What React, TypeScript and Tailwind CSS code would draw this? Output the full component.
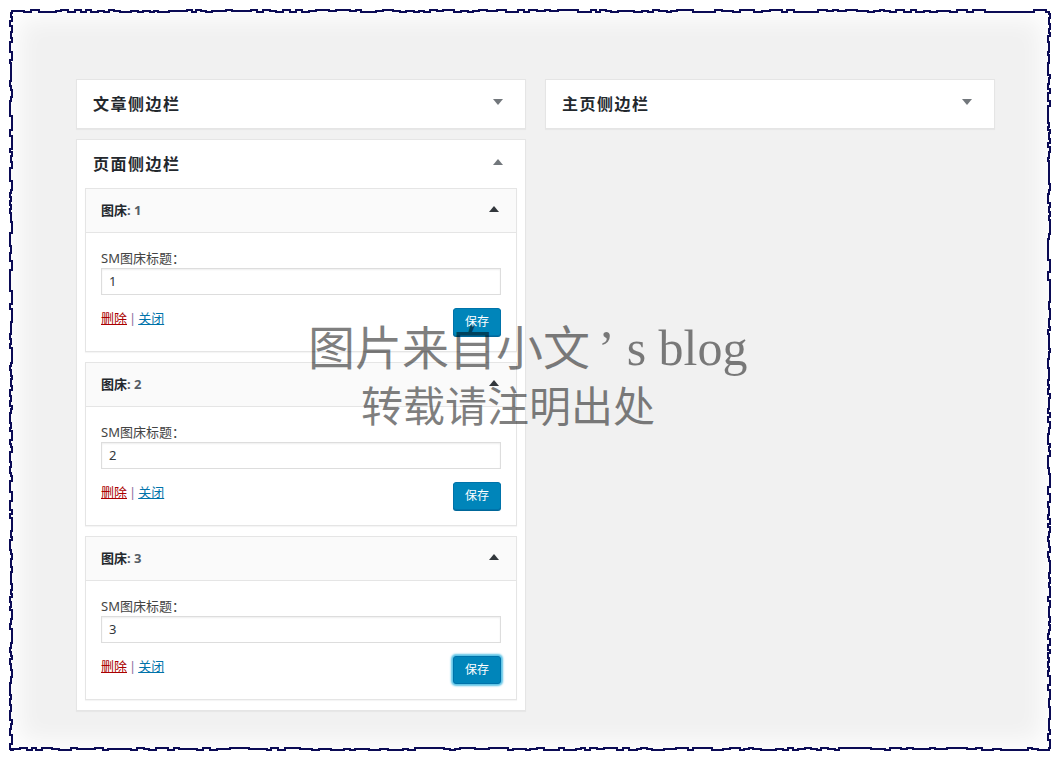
import React from "react";

const FONT = { fontFamily: '"Noto Sans", "Noto Sans CJK SC", sans-serif' };

function jaggedPath(w: number, h: number): string {
  let s = 12345;
  const r = () => {
    s = (s * 1103515245 + 12345) & 0x7fffffff;
    return s / 0x7fffffff;
  };
  const j = () => Math.round(r() * 3 - 1.5);
  let d = `M 0 0`;
  for (let x = 0; x <= w; x += 4 + Math.round(r() * 4)) {
    d += ` H ${x} V ${j()}`;
  }
  d += ` H ${w} V 0`;
  for (let y = 0; y <= h; y += 3 + Math.round(r() * 3)) {
    d += ` V ${y} H ${w + j()}`;
  }
  d += ` V ${h} H ${w}`;
  for (let x = w; x >= 0; x -= 4 + Math.round(r() * 4)) {
    d += ` H ${x} V ${h + j()}`;
  }
  d += ` H 0 V ${h}`;
  for (let y = h; y >= 0; y -= 3 + Math.round(r() * 3)) {
    d += ` V ${y} H ${j()}`;
  }
  d += ` V 0 Z`;
  return d;
}

function TriDown() {
  return (
    <svg width="10" height="6" viewBox="0 0 10 6" className="block">
      <path d="M0 0 H10 L5 6 Z" fill="#72777c" />
    </svg>
  );
}

function TriUp({ color = "#72777c" }: { color?: string }) {
  return (
    <svg width="10" height="6" viewBox="0 0 10 6" className="block">
      <path d="M0 6 H10 L5 0 Z" fill={color} />
    </svg>
  );
}

function Box({ title, open, children }: { title: string; open?: boolean; children?: React.ReactNode }) {
  return (
    <div className="bg-white border border-[#e5e5e5] shadow-[0_1px_1px_rgba(0,0,0,0.04)]">
      <div className="h-[48px] flex items-center justify-between pl-[16px] pr-[22px]">
        <span className="text-[16px] font-semibold tracking-[1.5px] text-[#23282d]">{title}</span>
        <div className="-mt-[4px]">{open ? <TriUp /> : <TriDown />}</div>
      </div>
      {children}
    </div>
  );
}

function Widget({ n, focus }: { n: number; focus?: boolean }) {
  return (
    <div className="border border-[#e5e5e5] bg-white shadow-[0_1px_1px_rgba(0,0,0,0.04)]">
      <div className="h-[44px] bg-[#fafafa] border-b border-[#e5e5e5] flex items-center justify-between pl-[15px] pr-[17px]">
        <span className="text-[13px] font-bold text-[#23282d]">
          图床<span className="text-[#555d66]">: {n}</span>
        </span>
        <div className="-mt-[3px]">
          <TriUp color="#32373c" />
        </div>
      </div>
      <div className="px-[15px] pt-[15px] pb-[15px]">
        <div className="text-[13px] leading-[20px] text-[#444]">SM图床标题：</div>
        <div className="h-[27px] border border-[#ddd] shadow-[inset_0_1px_2px_rgba(0,0,0,0.07)] flex items-center pl-[7px] text-[13px] text-[#32373c]">
          {n}
        </div>
        <div className="mt-[13px] flex items-start justify-between">
          <div className="text-[13px] leading-[20px]">
            <span className="text-[#a00] underline">删除</span>
            <span className="text-[#8a6d9e] mx-[2px]">|</span>
            <span className="text-[#0073aa] underline">关闭</span>
          </div>
          <div
            className={
              "w-[48px] h-[28px] rounded-[3px] bg-[#0085ba] border border-[#0073aa] text-white text-[12px] flex items-center justify-center " +
              (focus ? "shadow-[0_0_2px_2px_#5bc3e6]" : "shadow-[0_1px_0_#006799]")
            }
          >
            保存
          </div>
        </div>
      </div>
    </div>
  );
}

export default function App() {
  const W = 1039;
  const H = 739;
  return (
    <div className="w-[1061px] h-[761px] bg-white p-[11px] overflow-hidden" style={FONT}>
      <div className="relative w-[1039px] h-[739px] bg-[#f1f1f1] shadow-[inset_0_0_24px_8px_#ffffff] pl-[65px] pt-[68px]">
        <div className="flex gap-[19px] items-start">
          <div className="w-[450px] flex flex-col gap-[10px]">
            <Box title="文章侧边栏" />
            <Box title="页面侧边栏" open>
              <div className="px-[8px] pb-[10px] flex flex-col gap-[10px]">
                <Widget n={1} />
                <Widget n={2} />
                <Widget n={3} focus />
              </div>
            </Box>
          </div>
          <div className="w-[450px]">
            <Box title="主页侧边栏" />
          </div>
        </div>

        <svg
          className="absolute left-0 top-0 pointer-events-none overflow-visible"
          width={W}
          height={H}
          viewBox={`0 0 ${W} ${H}`}
        >
          <path d={jaggedPath(W - 1, H - 1)} fill="none" stroke="#0b0b55" strokeWidth="1.4" shapeRendering="crispEdges" />
        </svg>

        <div
          className="absolute left-[297px] top-[309px] leading-[56px] text-black/50 whitespace-nowrap pointer-events-none flex items-baseline"
          style={{ fontFamily: '"Liberation Serif", "Noto Sans CJK SC", serif' }}
        >
          <span className="text-[47px]">图片来自小文</span>
          <span className="text-[50px] ml-[8px]">’</span>
          <span className="text-[50px] ml-[12px]">s blog</span>
        </div>
        <div
          className="absolute left-[350px] top-[367px] text-[42px] leading-[52px] text-black/50 whitespace-nowrap pointer-events-none"
          style={{ fontFamily: '"Noto Sans CJK SC", sans-serif' }}
        >
          转载请注明出处
        </div>
      </div>
    </div>
  );
}
